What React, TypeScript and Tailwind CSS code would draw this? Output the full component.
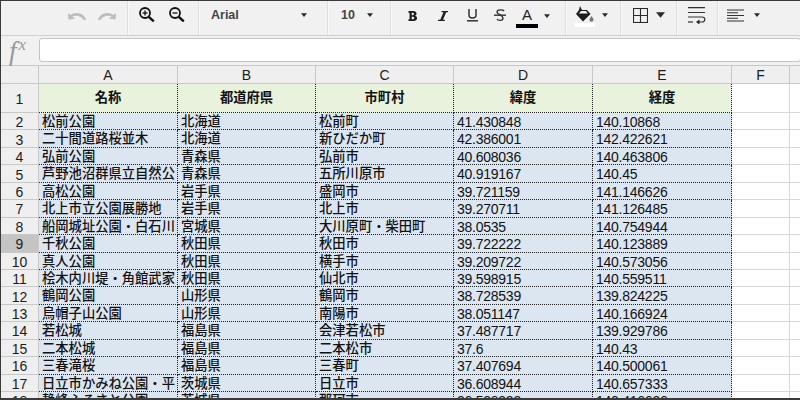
import React from 'react';

// only what the reference actually shows, long names are cut by the next cell
const rows = [
  ['松前公園', '北海道', '松前町', '41.430848', '140.10868'],
  ['二十間道路桜並木', '北海道', '新ひだか町', '42.386001', '142.422621'],
  ['弘前公園', '青森県', '弘前市', '40.608036', '140.463806'],
  ['芦野池沼群県立自然公', '青森県', '五所川原市', '40.919167', '140.45'],
  ['高松公園', '岩手県', '盛岡市', '39.721159', '141.146626'],
  ['北上市立公園展勝地', '岩手県', '北上市', '39.270711', '141.126485'],
  ['船岡城址公園・白石川', '宮城県', '大川原町・柴田町', '38.0535', '140.754944'],
  ['千秋公園', '秋田県', '秋田市', '39.722222', '140.123889'],
  ['真人公園', '秋田県', '横手市', '39.209722', '140.573056'],
  ['桧木内川堤・角館武家', '秋田県', '仙北市', '39.598915', '140.559511'],
  ['鶴岡公園', '山形県', '鶴岡市', '38.728539', '139.824225'],
  ['烏帽子山公園', '山形県', '南陽市', '38.051147', '140.166924'],
  ['若松城', '福島県', '会津若松市', '37.487717', '139.929786'],
  ['二本松城', '福島県', '二本松市', '37.6', '140.43'],
  ['三春滝桜', '福島県', '三春町', '37.407694', '140.500061'],
  ['日立市かみね公園・平', '茨城県', '日立市', '36.608944', '140.657333'],
  ['静峰ふるさと公園', '茨城県', '那珂市', '36.528333', '140.416636'],
];

const widths = ['w-[139px]', 'w-[138px]', 'w-[138px]', 'w-[139px]', 'w-[139px]'];
const headers = ['名称', '都道府県', '市町村', '緯度', '経度'];
const letters = ['A', 'B', 'C', 'D', 'E'];

const Divider = () => <div className="w-[2px] h-[34px] shrink-0 bg-[#dedede] border-r border-[#f8f8f8]" />;

const Caret = ({ big }: { big?: boolean }) => (
  <svg width={big ? 9 : 6} height={big ? 6 : 4} viewBox="0 0 8 5" className="shrink-0">
    <path d="M0 0h8L4 5z" fill="#2a2a2a" />
  </svg>
);

const ZoomGlass = ({ plus }: { plus?: boolean }) => (
  <svg width="17" height="15" viewBox="0 0 17 15" fill="none" stroke="#111" strokeWidth="1.8">
    <circle cx="6" cy="6" r="5" />
    <path d="M9.8 9.8l5 4.6" strokeWidth="2.4" />
    <path d="M3.500 6h5" strokeWidth="1.3" />
    {plus && <path d="M6 3.500v5" strokeWidth="1.3" />}
  </svg>
);

const Toolbar = () => (
  <div className="h-[35px] flex items-center bg-[#f1f1f1] border-b border-[#cfcfcf] shrink-0 relative">
    <div className="w-[126px] flex items-center pl-[67px] gap-[12px] h-full pb-[6px] shrink-0">
      <svg width="18" height="9" viewBox="0 0 18 9" fill="none" stroke="#bdbdbd" strokeWidth="2.6">
        <path d="M17 9C14 3 8 2 3 5" />
        <path d="M0 2l0.5 6.500 6.500-0.800z" fill="#bdbdbd" stroke="none" />
      </svg>
      <svg width="18" height="9" viewBox="0 0 18 9" fill="none" stroke="#bdbdbd" strokeWidth="2.6">
        <path d="M1 9C4 3 10 2 15 5" />
        <path d="M18 2l-0.5 6.500-6.500-0.800z" fill="#bdbdbd" stroke="none" />
      </svg>
    </div>
    <Divider />
    <div className="w-[69px] flex items-center pl-[10px] gap-[13px] h-full pb-[7px] shrink-0">
      <ZoomGlass plus />
      <ZoomGlass />
    </div>
    <Divider />
    <div className="w-[127px] flex items-center justify-between pl-[11px] pr-[20px] h-full pb-[6px] font-bold text-[#444] text-[12.5px] shrink-0">
      <span>Arial</span>
      <Caret />
    </div>
    <Divider />
    <div className="w-[61px] flex items-center justify-between pl-[12px] pr-[17px] h-full pb-[6px] font-bold text-[#444] text-[12.5px] shrink-0">
      <span>10</span>
      <Caret />
    </div>
    <Divider />
    <div className="w-[173px] flex items-center h-full pl-[6px] pb-[5px] shrink-0">
      <div className="w-[30px] flex justify-center">
        <svg width="10" height="10" viewBox="0 0 10 11"><path d="M0 0h5.500c4 0 4.300 4.500 1.800 5.200 3.200.6 3 5.800-1.500 5.800H0V9h1.200V2H0zM3.600 2v2.600h1.300c1.500 0 1.500-2.600 0-2.600zM3.600 6.400V9h1.500c1.700 0 1.700-2.600 0-2.600z" fill="#1c1c1c" /></svg>
      </div>
      <div className="w-[30px] flex justify-center">
        <svg width="10" height="10" viewBox="0 0 11 11"><path d="M4 0h7v1.500H9L5.500 9.500H7.500V11H0V9.500h2.500L6 1.500H4z" fill="#222" /></svg>
      </div>
      <div className="w-[28px] flex justify-center">
        <svg width="11" height="13" viewBox="0 0 11 13" fill="none" stroke="#333" strokeWidth="1.5"><path d="M2 0v6c0 4 7 4 7 0V0" /><path d="M0 11.800h11" /></svg>
      </div>
      <div className="w-[28px] flex justify-center">
        <svg width="12" height="13" viewBox="0 0 12 13" fill="none" stroke="#333" strokeWidth="1.4"><path d="M10 2C9 .5 3 .2 3 3c0 2.500 6 3 6 6 0 3-5 3-6 1" /><path d="M0 6.200h12" /></svg>
      </div>
      <div className="w-[26px] flex flex-col items-center shrink-0 pt-[5px]">
        <span className="text-[15px] leading-[14px] text-[#222]">A</span>
        <div className="w-[22px] h-[4px] bg-black mt-[2px]" />
      </div>
      <div className="w-[14px] flex justify-center"><Caret /></div>
    </div>
    <Divider />
    <div className="w-[53px] flex items-center h-full pl-[7px] gap-[7px] shrink-0">
      <div className="flex flex-col items-center w-[21px] -mt-[3px]">
        <svg width="19" height="17" viewBox="0 0 19 17">
          <path d="M5 0l2 4 5 0 3.500 4L8 15.500 1 8l3-4z" fill="#1c1c1c" />
          <path d="M3.800 7.500h9L11 5H6z" fill="#f1f1f1" />
          <path d="M16.500 10c1.300 1.800 2 2.800 2 3.800a2 2 0 01-4 0c0-1 .7-2 2-3.800z" fill="#777" />
        </svg>
        <div className="w-[21px] h-[4px] bg-white" />
      </div>
      <div className="pb-[6px]"><Caret /></div>
    </div>
    <Divider />
    <div className="w-[54px] flex items-center h-full pl-[11px] gap-[8px] pb-[6px] shrink-0">
      <svg width="15" height="15" viewBox="0 0 15 15" fill="none" stroke="#2a2a2a" strokeWidth="1.1"><rect x="0.5" y="0.5" width="14" height="14" /><path d="M7.500 0v15M0 7.500h15" /></svg>
      <Caret big />
    </div>
    <Divider />
    <div className="w-[39px] flex items-center h-full pl-[10px] pb-[5px] shrink-0">
      <svg width="18" height="17" viewBox="0 0 18 17" fill="none" stroke="#333" strokeWidth="1.2">
        <path d="M0 .7h17M0 5.500h17M0 10h14c4 0 3.500 5 0 5h-3" />
        <path d="M0 15h5" />
        <path d="M11.500 12.500v5L8 15z" fill="#222" stroke="none" />
      </svg>
    </div>
    <Divider />
    <div className="flex items-center h-full pl-[8px] gap-[10px] pb-[6px]">
      <svg width="17" height="13" viewBox="0 0 17 13" fill="none" stroke="#333" strokeWidth="1.1"><path d="M0 1h17M0 3.800h11M0 6.500h17M0 9.200h11M0 12h17" /></svg>
      <Caret />
    </div>
  </div>
);

const FormulaBar = () => (
  <div className="h-[30px] flex items-center bg-[#f1f1f1] shrink-0 border-b border-[#c8c8c8] pb-[2px]">
    <div className="w-[38px] shrink-0 h-full flex pl-[8px] text-[#999] italic font-['Liberation_Serif',serif]">
      <span className="text-[27px] leading-[26px] mt-[2px]">f</span>
      <span className="text-[17px] leading-[14px] ml-[2px] mt-[2px]">x</span>
    </div>
    <div className="flex-1 h-[24px] bg-white border border-[#c4c4c4] rounded-[3px] -mr-px" />
  </div>
);

const HeaderRow = () => (
  <div className="h-[18px] flex bg-[#efefef] border-b border-[#c8c8c8] text-[14px] leading-[18px] text-[#1c1c1c] shrink-0">
    <div className="w-[38px] border-r border-[#c8c8c8]" />
    {letters.map((l, i) => (
      <div key={l} className={`${widths[i]} text-center border-r border-[#c8c8c8]`}>{l}</div>
    ))}
    <div className="w-[58px] text-center border-r border-[#c8c8c8]">F</div>
    <div className="flex-1" />
  </div>
);

const RowNumber = ({ n, active }: { n: number; active?: boolean }) => (
  <div className={`w-[38px] h-full shrink-0 flex items-center justify-center text-[14px] pt-[3px] border-r border-b border-[#c8c8c8] text-[#1c1c1c] ${active ? 'bg-[#c4c4c4]' : 'bg-[#efefef]'}`}>
    {n}
  </div>
);

const BlankCols = () => (
  <>
    <div className="w-[58px] h-full border-r border-b border-[#d8d8d8] bg-white shrink-0" />
    <div className="flex-1 h-full border-b border-[#d8d8d8] bg-white" />
  </>
);

export default function App() {
  return (
    <div className="w-[800px] h-[400px] overflow-hidden flex flex-col bg-white border-l border-t border-[#3a3a3a] font-['Liberation_Sans','Noto_Sans_CJK_JP',sans-serif]">
      <Toolbar />
      <FormulaBar />
      <HeaderRow />
      <div className="h-[29px] flex shrink-0">
        <RowNumber n={1} />
        {headers.map((h, i) => (
          <div
            key={h}
            className={`${widths[i]} h-full shrink-0 bg-[#e9f2dd] flex items-center justify-center text-[13.3px] font-bold text-[#111] border-r border-b border-dotted border-[#222]`}
          >
            {h}
          </div>
        ))}
        <BlankCols />
      </div>
      <div className="flex-1 min-h-0 overflow-hidden">
        {rows.map((r, idx) => (
          <div key={idx} className="h-[17.45px] flex">
            <RowNumber n={idx + 2} active={idx === 7} />
            {r.map((c, i) => (
              <div
                key={i}
                className={`${widths[i]} h-full shrink-0 bg-[#dce6f1] overflow-hidden whitespace-nowrap text-[#111] pl-[3px] pt-[1px] border-r border-b border-dotted border-[#222] ${i < 3 ? 'text-[13.3px] leading-[16px] font-medium' : 'text-[14px] leading-[16px] tracking-[-0.25px]'}`}
              >
                {c}
              </div>
            ))}
            <BlankCols />
          </div>
        ))}
      </div>
      <div className="h-[2px] bg-[#3a3a3a] shrink-0" />
    </div>
  );
}
